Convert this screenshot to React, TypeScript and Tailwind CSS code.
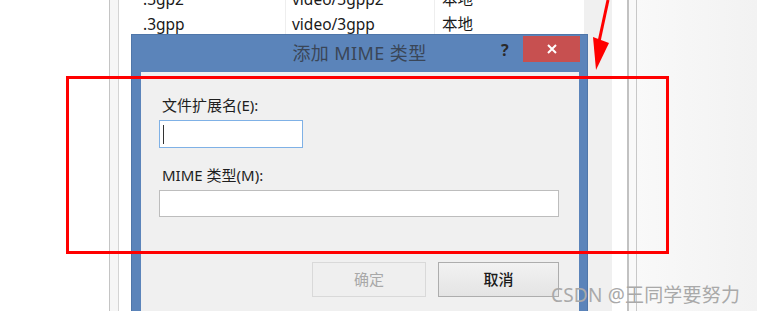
import React from "react";

const F = { fontFamily: '"Noto Sans", "Noto Sans CJK SC", sans-serif' };

export default function App() {
  return (
    <div className="relative w-[757px] h-[311px] overflow-hidden bg-white flex" style={F}>
      {/* background window pieces */}
      <div className="w-[109px] shrink-0 bg-white" />
      <div className="w-px shrink-0 bg-[#c4c4c4]" />
      <div className="w-[8px] shrink-0 bg-[#f6f6f6]" />
      <div className="w-px shrink-0 bg-[#d4d4d4]" />
      {/* table */}
      <div className="w-[465px] shrink-0 bg-white flex text-[15.5px] text-[#1a1a1a]">
        <div className="w-[166px] shrink-0 flex flex-col -mt-[13px] pl-[24px]">
          <div className="h-[25px] leading-[25px]">.3gp2</div>
          <div className="h-[25px] leading-[25px]">.3gpp</div>
        </div>
        <div className="w-px shrink-0 bg-[#eeeeee]" />
        <div className="w-[148px] shrink-0 flex flex-col -mt-[13px] pl-[6px]">
          <div className="h-[25px] leading-[25px]">video/3gpp2</div>
          <div className="h-[25px] leading-[25px]">video/3gpp</div>
        </div>
        <div className="w-px shrink-0 bg-[#eeeeee]" />
        <div className="flex-1 flex flex-col -mt-[13px] pl-[7px]">
          <div className="h-[25px] leading-[25px]">本地</div>
          <div className="h-[25px] leading-[25px]">本地</div>
        </div>
      </div>
      <div className="w-[28px] shrink-0 bg-[#f0f0f0]" />
      <div className="w-[15px] shrink-0 bg-white" />
      <div className="w-[2px] shrink-0 bg-[#c2c2c2]" />
      <div className="w-[7px] shrink-0 bg-[#f9f9f9]" />
      <div className="w-px shrink-0 bg-[#c8c8c8]" />
      <div className="flex-1 bg-gradient-to-r from-[#f9f9f9] to-[#f2f2f2]" />

      {/* dialog */}
      <div className="absolute left-[131px] top-[34px] w-[457px] h-[290px] bg-[#5b84ba] border border-[#4f76a9] flex flex-col">
        <div className="h-[37px] shrink-0 relative flex items-center justify-center">
          <span className="text-[18px] text-[#3a4657] tracking-[0.4px]">添加 MIME 类型</span>
          <span className="absolute left-[369px] top-[3px] text-[16px] font-bold text-[#2a2a2a]">?</span>
          <div className="absolute left-[391px] top-[1px] w-[57px] h-[26px] bg-[#c75050] flex items-center justify-center">
            <svg width="10" height="10" viewBox="0 0 10 10">
              <path d="M1 1L9 9M9 1L1 9" stroke="#ffffff" strokeWidth="2" />
            </svg>
          </div>
        </div>
        <div className="ml-[9px] mr-[8px] flex-1 bg-[#f0f0f0] flex flex-col pl-[18px] pt-[23px] text-[15px] text-[#1e1e1e]">
          <div className="pl-[3px] h-[20px] leading-[20px]">文件扩展名(E):</div>
          <div className="mt-[5px] w-[144px] h-[28px] bg-white border border-[#7fb1e6] flex items-center pl-[3px]">
            <div className="w-px h-[19px] bg-[#333333]" />
          </div>
          <div className="mt-[17px] pl-[3px] h-[20px] leading-[20px]">MIME 类型(M):</div>
          <div className="mt-[5px] w-[400px] h-[27px] bg-white border border-[#bdbdbd]" />
          <div className="mt-[45px] flex gap-[12px] pl-[153px]">
            <div className="w-[114px] h-[35px] border border-[#d9d9d9] bg-[#efefef] flex items-center justify-center text-[15px] text-[#a8a8a8]">确定</div>
            <div className="w-[121px] h-[35px] border border-[#adadad] bg-gradient-to-b from-[#f2f2f2] to-[#e4e4e4] flex items-center justify-center text-[15px] font-medium text-[#1a1a1a]">取消</div>
          </div>
        </div>
      </div>

      {/* red annotation */}
      <div className="absolute left-[66px] top-[76px] w-[603px] h-[178px] border-[3px] border-[#ff0000]" />
      <svg className="absolute left-[588px] top-0" width="30" height="75" viewBox="0 0 30 75">
        <path d="M20 0 L10.5 44" stroke="#ff0000" strokeWidth="3" fill="none" />
        <path d="M5 37 L21 43 L8 70 Z" fill="#ff0000" />
      </svg>

      {/* watermark */}
      <div className="absolute left-[551px] top-[283px] text-[19px] leading-[24px] text-[#a9a9a9] tracking-[0.2px]">CSDN @王同学要努力</div>
    </div>
  );
}
